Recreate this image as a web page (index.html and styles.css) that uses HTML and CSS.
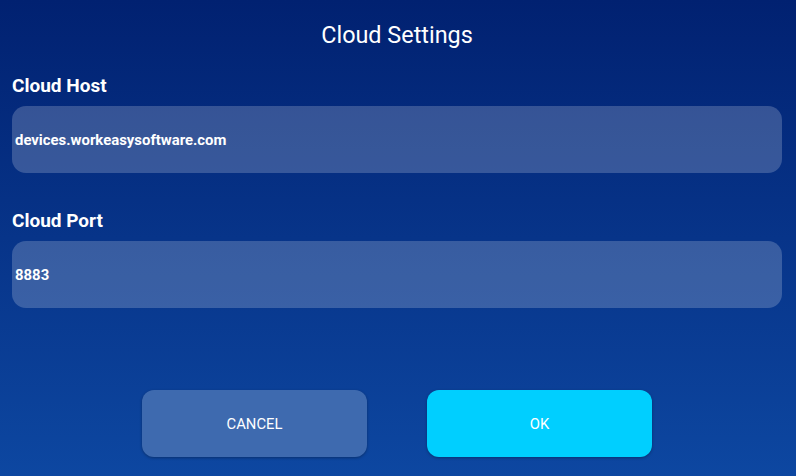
FILE: index.html
```html
<!DOCTYPE html>
<html lang="en">
<head>
    <meta charset="UTF-8">
    <meta name="viewport" content="width=device-width, initial-scale=1.0">
    <title>Cloud Settings</title>
    <link rel="stylesheet" href="styles.css">
</head>
<body>
<div class="screen">
    <h1 class="title">Cloud Settings</h1>

    <!-- Host field -->
    <div class="field">
        <label class="field-label" for="host">Cloud Host</label>
        <div class="field-box" id="host">devices.workeasysoftware.com</div>
    </div>

    <!-- Port field -->
    <div class="field field-port">
        <label class="field-label" for="port">Cloud Port</label>
        <div class="field-box" id="port">8883</div>
    </div>

    <!-- Dialog buttons -->
    <div class="actions">
        <button class="btn btn-cancel">CANCEL</button>
        <button class="btn btn-ok">OK</button>
    </div>
</div>
</body>
</html>
```

FILE: styles.css
```css
html, body {
    margin: 0;
    padding: 0;
    height: 100%;
}

body {
    font-family: Roboto, "Noto Sans", Arial, sans-serif;
    color: #fff;
    background: linear-gradient(to bottom, #012171 0%, #0d47a1 100%);
    overflow: hidden;
}

.screen {
    display: flex;
    flex-direction: column;
    height: 476px;
    padding: 0 14px 0 12px;
    box-sizing: border-box;
}

.title {
    margin: 0;
    padding-top: 20px;
    font-size: 23.4px;
    font-weight: 400;
    line-height: 30px;
    text-align: center;
}

.field {
    display: flex;
    flex-direction: column;
    margin-top: 26px;
}

.field-port {
    margin-top: 38px;
}

.field-label {
    font-size: 19px;
    font-weight: 700;
    line-height: 20px;
    margin-bottom: 10px;
}

.field-box {
    height: 67px;
    display: flex;
    align-items: center;
    padding-left: 3px;
    border-radius: 14px;
    background: rgba(255, 255, 255, 0.2);
    font-size: 14.9px;
    font-weight: 700;
}

.actions {
    display: flex;
    justify-content: center;
    gap: 60px;
    margin-top: 82px;
}

.btn {
    width: 225px;
    height: 67px;
    border: none;
    border-radius: 12px;
    font-family: Roboto, Arial, sans-serif;
    font-size: 14.8px;
    color: #fff;
    box-shadow: 0 1px 3px rgba(0, 0, 0, 0.3);
    cursor: pointer;
}

.btn-cancel {
    background: #3e6aaf;
}

.btn-ok {
    background: #00cfff;
}
```
